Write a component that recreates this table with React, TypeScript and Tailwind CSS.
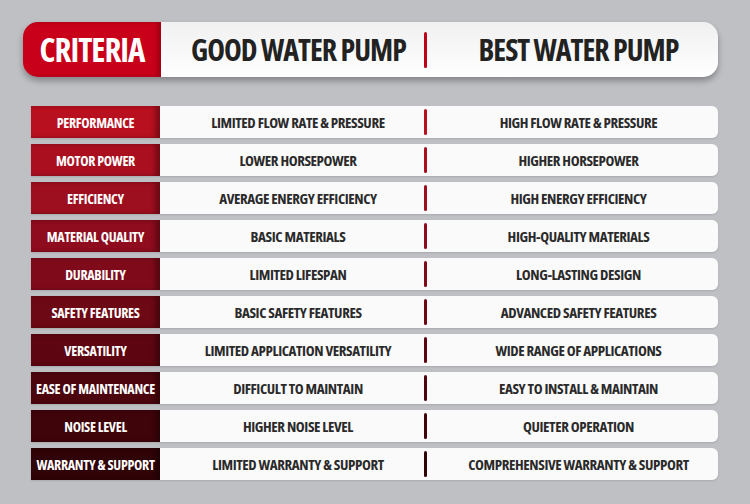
const rows = [
  { label: 'PERFORMANCE', good: 'LIMITED FLOW RATE & PRESSURE', best: 'HIGH FLOW RATE & PRESSURE', bg: 'bg-[#b8101f]' },
  { label: 'MOTOR POWER', good: 'LOWER HORSEPOWER', best: 'HIGHER HORSEPOWER', bg: 'bg-[#aa0f20]' },
  { label: 'EFFICIENCY', good: 'AVERAGE ENERGY EFFICIENCY', best: 'HIGH ENERGY EFFICIENCY', bg: 'bg-[#9d0e1f]' },
  { label: 'MATERIAL QUALITY', good: 'BASIC MATERIALS', best: 'HIGH-QUALITY MATERIALS', bg: 'bg-[#8e0c1d]' },
  { label: 'DURABILITY', good: 'LIMITED LIFESPAN', best: 'LONG-LASTING DESIGN', bg: 'bg-[#7f0a1a]' },
  { label: 'SAFETY FEATURES', good: 'BASIC SAFETY FEATURES', best: 'ADVANCED SAFETY FEATURES', bg: 'bg-[#6d0815]' },
  { label: 'VERSATILITY', good: 'LIMITED APPLICATION VERSATILITY', best: 'WIDE RANGE OF APPLICATIONS', bg: 'bg-[#5d0611]' },
  { label: 'EASE OF MAINTENANCE', good: 'DIFFICULT TO MAINTAIN', best: 'EASY TO INSTALL & MAINTAIN', bg: 'bg-[#4c050d]' },
  { label: 'NOISE LEVEL', good: 'HIGHER NOISE LEVEL', best: 'QUIETER OPERATION', bg: 'bg-[#3e040a]' },
  { label: 'WARRANTY & SUPPORT', good: 'LIMITED WARRANTY & SUPPORT', best: 'COMPREHENSIVE WARRANTY & SUPPORT', bg: 'bg-[#300307]' },
];

export default function App() {
  return (
    <div className="w-[750px] h-[504px] bg-[#bfc0c4] pt-[22px] font-['Open_Sans',sans-serif] font-stretch-condensed font-bold">
      {/* header */}
      <div className="ml-[23px] w-[695px] h-[55px] flex rounded-[15px] shadow-[0_4px_6px_rgba(0,0,0,0.3)]">
        <div className="w-[138px] bg-[#c9001a] rounded-l-[15px] shadow-[inset_-4px_0_4px_rgba(0,0,0,0.2)] flex items-center justify-center text-white text-[33px] tracking-[-1px] leading-none">
          CRITERIA
        </div>
        <div className="flex-1 flex items-center bg-gradient-to-b from-[#f0f0f0] to-white rounded-r-[15px] text-[#222] text-[30px] tracking-[-1px] leading-none">
          <div className="w-[263px] pl-3 text-center whitespace-nowrap">GOOD WATER PUMP</div>
          <div className="w-[3px] h-[36px] bg-[#c0001a] rounded-full" />
          <div className="flex-1 pl-3 text-center whitespace-nowrap">BEST WATER PUMP</div>
        </div>
      </div>

      {/* rows */}
      <div className="mt-[29px] ml-[31px] w-[687px] flex flex-col gap-[6px]">
        {rows.map((r) => (
          <div key={r.label} className="h-[32px] flex shadow-[0_1px_2px_rgba(0,0,0,0.12)] rounded-r-[6px]">
            <div
              className={`w-[129px] ${r.bg} shadow-[inset_-5px_0_4px_rgba(0,0,0,0.3)] flex items-center justify-center text-white text-[14px] tracking-[-0.3px] whitespace-nowrap`}
            >
              {r.label}
            </div>
            <div className="flex-1 flex items-center bg-[#fafafa] rounded-r-[6px] text-[#2a2a2a] text-[15px] tracking-[-0.4px]">
              <div className="w-[264px] pl-3 text-center whitespace-nowrap">{r.good}</div>
              <div className={`w-[3px] h-[26px] rounded-full ${r.bg}`} />
              <div className="flex-1 pl-3 text-center whitespace-nowrap">{r.best}</div>
            </div>
          </div>
        ))}
      </div>
    </div>
  );
}
